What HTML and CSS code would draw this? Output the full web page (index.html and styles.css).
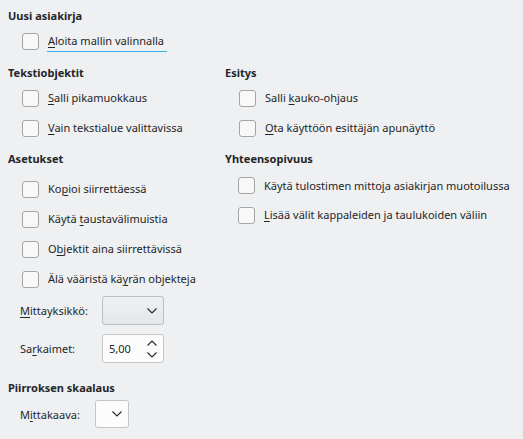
FILE: index.html
```html
<!DOCTYPE html>
<html lang="fi">
<head>
<meta charset="utf-8">
<link rel="stylesheet" href="styles.css">
</head>
<body>
<div class="page">
  <section class="sec sec-top">
    <h2 class="head">Uusi asiakirja</h2>
    <div class="rows">
      <label class="check"><span class="box"></span><span class="lbl focus"><u>A</u>loita mallin valinnalla</span></label>
    </div>
  </section>

  <div class="cols">
    <section class="sec">
      <h2 class="head">Tekstiobjektit</h2>
      <div class="rows">
        <label class="check"><span class="box"></span><span class="lbl"><u>S</u>alli pikamuokkaus</span></label>
        <label class="check"><span class="box"></span><span class="lbl"><u>V</u>ain tekstialue valittavissa</span></label>
      </div>
    </section>
    <section class="sec">
      <h2 class="head">Esitys</h2>
      <div class="rows">
        <label class="check"><span class="box"></span><span class="lbl">Salli <u>k</u>auko-ohjaus</span></label>
        <label class="check"><span class="box"></span><span class="lbl"><u>O</u>ta käyttöön esittäjän apunäyttö</span></label>
      </div>
    </section>

    <section class="sec">
      <h2 class="head">Asetukset</h2>
      <div class="rows rows-loose">
        <label class="check"><span class="box"></span><span class="lbl">Ko<u>p</u>ioi siirrettäessä</span></label>
        <label class="check"><span class="box"></span><span class="lbl">Käytä <u>t</u>austavälimuistia</span></label>
        <label class="check"><span class="box"></span><span class="lbl">O<u>b</u>jektit aina siirrettävissä</span></label>
        <label class="check"><span class="box"></span><span class="lbl">Älä vääristä kä<u>y</u>rän objekteja</span></label>
      </div>
      <div class="form">
        <span class="flabel"><u>M</u>ittayksikkö:</span>
        <div class="combo">
          <svg class="chev" width="10" height="6" viewBox="0 0 10 6"><path d="M0.5 0.5 L5 5 L9.5 0.5" fill="none" stroke="#232629" stroke-width="1.1"/></svg>
        </div>
        <span class="flabel">Sa<u>r</u>kaimet:</span>
        <div class="spin">
          <span class="val">5,00</span>
          <svg class="arrows" width="10" height="18" viewBox="0 0 10 18"><path d="M0.5 5.5 L5 1 L9.5 5.5" fill="none" stroke="#232629" stroke-width="1.1"/><path d="M0.5 12.5 L5 17 L9.5 12.5" fill="none" stroke="#232629" stroke-width="1.1"/></svg>
        </div>
      </div>
    </section>
    <section class="sec">
      <h2 class="head">Yhteensopivuus</h2>
      <div class="rows rows-tight">
        <label class="check"><span class="box"></span><span class="lbl">Käytä tulostimen mitto<u>j</u>a asiakirjan muotoilussa</span></label>
        <label class="check"><span class="box"></span><span class="lbl"><u>L</u>isää välit kappaleiden ja taulukoiden väliin</span></label>
      </div>
    </section>

    <section class="sec sec-scale">
      <h2 class="head">Piirroksen skaalaus</h2>
      <div class="form form-scale">
        <span class="flabel">M<u>i</u>ttakaava:</span>
        <div class="combo combo-edit">
          <svg class="chev" width="10" height="6" viewBox="0 0 10 6"><path d="M0.5 0.5 L5 5 L9.5 0.5" fill="none" stroke="#232629" stroke-width="1.1"/></svg>
        </div>
      </div>
    </section>
  </div>
</div>
</body>
</html>
```

FILE: styles.css
```css
* { box-sizing: border-box; }
html, body {
  margin: 0;
  padding: 0;
  background: #eff0f1;
}
body {
  width: 523px;
  height: 439px;
  overflow: hidden;
  font-family: "Noto Sans", "DejaVu Sans", sans-serif;
  font-size: 11px;
  color: #232629;
}
.page {
  padding: 7px 0 0 8px;
}
.head {
  margin: 0;
  font-size: 11px;
  font-weight: bold;
  line-height: 18px;
  height: 18px;
}
.rows {
  display: flex;
  flex-direction: column;
  margin-top: 1px;
  padding-left: 14px;
}
.rows-loose { margin-top: 6px; }
.check {
  display: flex;
  align-items: center;
  height: 30px;
  line-height: 16px;
}
.rows-tight { padding-left: 13px; margin-top: 3px; }
.rows-tight .check { height: 29.5px; }
.box {
  width: 17px;
  height: 17px;
  border: 1px solid #a3a5a7;
  border-radius: 3px;
  background: #f8f8f9;
  flex: none;
  margin-right: 9px;
}
.lbl { white-space: nowrap; }
u {
  text-decoration: underline;
  text-decoration-thickness: 1px;
  text-underline-offset: 2px;
}
.focus {
  position: relative;
}
.focus::after {
  content: "";
  position: absolute;
  left: -1px;
  right: -3px;
  bottom: -3px;
  height: 1px;
  background: #3daee9;
}
.cols {
  display: grid;
  grid-template-columns: 217px 1fr;
  row-gap: 7px;
  align-items: start;
  margin-top: 8px;
}
.form {
  display: grid;
  grid-template-columns: auto auto;
  justify-content: start;
  align-items: center;
  column-gap: 14px;
  row-gap: 9px;
  margin-top: 2px;
  padding-left: 12px;
}
.flabel { white-space: nowrap; }
.combo {
  width: 62px;
  height: 29px;
  border: 1px solid #bcbebf;
  border-radius: 3px;
  background: linear-gradient(#eeeff0, #e6e7e8);
  display: flex;
  align-items: center;
  justify-content: flex-end;
  padding-right: 6px;
}
.chev { display: block; }
.spin {
  width: 62px;
  height: 29px;
  border: 1px solid #c4c6c7;
  border-radius: 3px;
  background: #fcfcfc;
  display: flex;
  align-items: center;
  justify-content: space-between;
  padding: 0 6px 0 6px;
}
.arrows { display: block; }
.sec-scale { margin-top: 9px; }
.form-scale {
  margin-top: 3px;
  column-gap: 15px;
}
.combo-edit {
  width: 34px;
  height: 28px;
  background: #fcfcfc;
  border-color: #c4c6c7;
}
```
